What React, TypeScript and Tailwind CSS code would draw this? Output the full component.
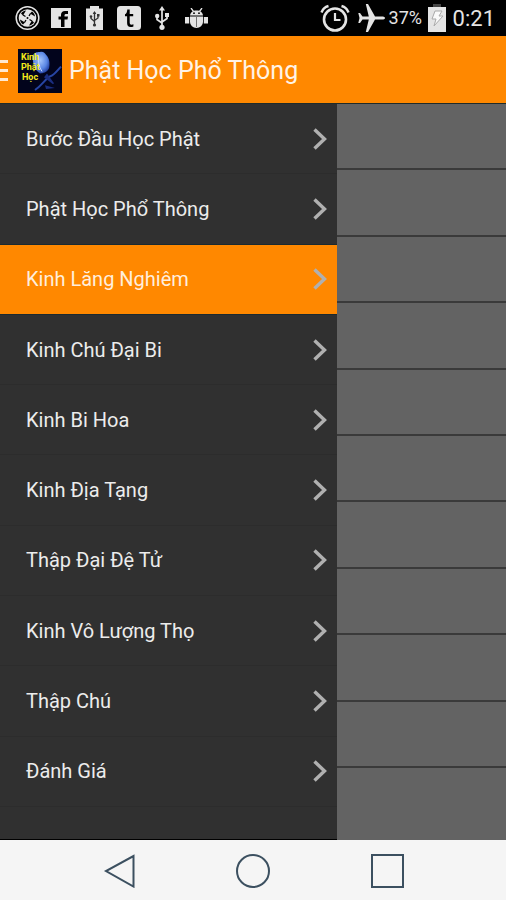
import React, { useState } from "react";

const menuItems = [
  "Bước Đầu Học Phật",
  "Phật Học Phổ Thông",
  "Kinh Lăng Nghiêm",
  "Kinh Chú Đại Bi",
  "Kinh Bi Hoa",
  "Kinh Địa Tạng",
  "Thập Đại Đệ Tử",
  "Kinh Vô Lượng Thọ",
  "Thập Chú",
  "Đánh Giá",
];

function StatusBar() {
  return (
    <div className="flex h-9 items-center justify-between bg-black pl-[15px] pr-[11px] text-[#e4e4e4]">
      <div className="flex items-center">
        {/* shutter */}
        <svg width="25" height="26" viewBox="0 0 25 26" fill="none" stroke="currentColor">
          <circle cx="12.5" cy="13" r="11.3" strokeWidth="1.5" />
          <circle cx="12.5" cy="13" r="8.8" fill="currentColor" stroke="none" />
          <path
            d="M11 5.500 8 10.500 6 8.500C7.200 6.800 9 5.700 11 5.500zM20 11.500l-5-3 2-2c1.700 1.200 2.800 3 3 5zM14 20.500l3-5 2 2c-1.200 1.700-3 2.800-5 3zM5 14.500l5 3-2 2c-1.700-1.200-2.800-3-3-5z"
            fill="#000"
            stroke="none"
          />
          <path d="m8 10 2.500 1.500M15.500 8.500 14 11M17 16l-2.500-1.500M9.500 17.500 11 15" stroke="#000" strokeWidth="1.300" />
          <circle cx="12.5" cy="13" r="1" fill="#000" stroke="none" />
        </svg>
        {/* facebook */}
        <svg className="ml-[11px]" width="20" height="20" viewBox="0 0 20 20">
          <path d="M0 0h20v20H0z" fill="currentColor" />
          <path d="M10 19v-7.500H7.500v-3H10V6.800C10 4.300 11.500 3 14 3h3v3h-1.800C14 6 13.500 6.500 13.500 7.500v1H17l-.5 3h-3V19z" fill="#000" />
        </svg>
        {/* battery with usb */}
        <svg className="ml-[15px]" width="17" height="24" viewBox="0 0 17 24">
          <path d="M4 0h9v2.500h4V24H0V2.500h4z" fill="currentColor" />
          <path d="M8.500 6v13M5 10v2.500l3.500 3M12 9v3l-3.500 2.500" fill="none" stroke="#333" strokeWidth="1.300" />
          <circle cx="8.500" cy="19" r="1.600" fill="#333" />
          <circle cx="5" cy="10.500" r="1.300" fill="#333" />
          <path d="M11 8h2.500v2.500H11zM8.500 5l1.800 3H6.700z" fill="#333" />
        </svg>
        {/* tumblr */}
        <svg className="ml-[14px]" width="24" height="24" viewBox="0 0 24 24">
          <rect width="24" height="24" rx="3.500" fill="currentColor" />
          <path d="M10.300 3.500h2.400V8h3.500v2.200h-3.500v6.300c0 1.600.7 2.200 1.800 2.200.7 0 1.300-.2 1.900-.5v2.300c-.9.400-1.800.6-2.800.6-2.300 0-3.500-1.200-3.500-4v-6.900H8V8.300c1.400-.5 2.100-2 2.300-4.800z" fill="#000" />
        </svg>
        {/* usb */}
        <svg className="ml-[14px]" width="14" height="24" viewBox="0 0 14 24" fill="none" stroke="currentColor" strokeWidth="1.700">
          <path d="M7 3v18M2 10v3.500l5 3.500M12 9v3.500l-5 3.500" />
          <path d="m7 0 3 4.500H4z" fill="currentColor" stroke="none" />
          <circle cx="7" cy="21.300" r="2.600" fill="currentColor" stroke="none" />
          <circle cx="2.200" cy="10" r="2.200" fill="currentColor" stroke="none" />
          <path d="M10 7h4v4h-4z" fill="currentColor" stroke="none" />
        </svg>
        {/* android debug */}
        <svg className="ml-4" width="23" height="20" viewBox="0 0 23 20" fill="currentColor">
          <path d="M5 7.500C5.300 4.500 7.800 2.500 11.500 2.500S17.700 4.500 18 7.500z" />
          <path d="m6 0 2.500 3.500M17 0l-2.500 3.500" stroke="currentColor" strokeWidth="1.300" />
          <path d="M5 8.500h13v5.500a6.500 6 0 0 1-13 0zM0 9h4.200v6.500H0zM18.800 9H23v6.500h-4.200z" />
          <circle cx="9" cy="5.200" r=".9" fill="#000" />
          <circle cx="14" cy="5.200" r=".9" fill="#000" />
          <path d="M11.500 9v10" stroke="#555" strokeWidth=".8" />
        </svg>
      </div>
      <div className="flex items-center">
        {/* alarm */}
        <svg width="30" height="28" viewBox="0 0 30 28" fill="none" stroke="currentColor" strokeWidth="2.600">
          <circle cx="15" cy="15.500" r="11" />
          <path d="M15 9v7h5.500" strokeWidth="2.200" />
          <path d="M1.500 8.500C2.500 5.500 5 3 8.500 2M28.500 8.500c-1-3-3.500-5.500-7-6.500" strokeWidth="2.400" />
        </svg>
        {/* airplane */}
        <svg className="ml-2" width="27" height="28" viewBox="0 0 27 28" fill="currentColor">
          <path d="M27 14c0-1-1.500-1.500-3-1.500h-7L10 0H7.800l3 12.500H4.500L2 9H.3l1.200 5L.3 19H2l2.500-3.500h6.300l-3 12.500H10l7-12.500h7c1.500 0 3-.5 3-1.500z" />
        </svg>
        <span className="ml-1 w-[39px] text-lg">37%</span>
        <svg width="18" height="28" viewBox="0 0 18 28">
          <path d="M5 0h8v4H5z" fill="#444" />
          <path d="M0 3h18v25H0z" fill="currentColor" />
          <path d="M7 7h7l-3 5h4L6 22l2-7H4z" fill="#fafafa" stroke="#aaa" strokeWidth="1" />
        </svg>
        <span className="ml-[7px] text-[22px]">0:21</span>
      </div>
    </div>
  );
}

function Logo() {
  return (
    <svg className="ml-[10px]" width="44" height="44" viewBox="0 0 44 45" preserveAspectRatio="none">
      <defs>
        <radialGradient id="petal" cx="45%" cy="40%" r="65%">
          <stop offset="0" stopColor="#a4c4fa" />
          <stop offset=".6" stopColor="#5a86e4" />
          <stop offset="1" stopColor="#1c3798" />
        </radialGradient>
      </defs>
      <path d="M0 0h44v45H0z" fill="#02041c" />
      <path d="M15 6c2-3 5-3 7-3 3-1 5 1 6 3 4 4 4 10 3 14-2 4-6 5-9 5-5-3-8-9-7-19z" fill="url(#petal)" />
      <path d="M20 6c0 7 1 12 4 17" stroke="#c3d8ff" fill="none" />
      <path d="M43 18c-4 4-6 8-11 10-5 3-8 9-15 14" stroke="#2745a4" strokeWidth="2" fill="none" />
      <path d="m29 25 7 10-1 1-9-7zM27 37l10 3-9 1z" fill="#1b2e80" />
      <g fill="#f5ec1b" fontFamily="Roboto, sans-serif" fontWeight="700" fontSize="9">
        <text x="3" y="11">Kinh</text>
        <text x="3" y="21">Phật</text>
        <text x="4" y="32">Học</text>
      </g>
    </svg>
  );
}

function App() {
  const [selected, setSelected] = useState(2);

  return (
    <div className="flex min-h-screen flex-col bg-black font-['Roboto','Noto_Sans',sans-serif]">
      <StatusBar />

      <header className="flex h-[67px] items-center bg-[#ff8800] pt-0.5">
        <button aria-label="Menu" className="flex w-2 flex-col gap-[6px]">
          <span className="h-[3px] w-full bg-[#ffe9d2]" />
          <span className="h-[3px] w-full bg-[#ffe9d2]" />
          <span className="h-[3px] w-full bg-[#ffe9d2]" />
        </button>
        <Logo />
        <h1 className="ml-[7px] text-[25px] text-[#fff3e6]">Phật Học Phổ Thông</h1>
      </header>

      <div className="flex flex-1 border-t border-[#1f2b29]">
        <nav className="flex w-2/3 flex-col border-b border-black bg-[#303030] pb-8">
          {menuItems.map((item, index) => (
            <button
              key={item}
              onClick={() => setSelected(index)}
              className={`flex min-h-12 flex-1 items-center justify-between border-b pl-[26px] pr-2.5 text-left text-xl ${
                index === selected
                  ? "border-[#1b2a30] bg-[#ff8800] text-[#ffeedd]"
                  : index === selected - 1
                    ? "border-[#1b2a30] text-[#ececec]"
                    : "border-[#2c2c2c] text-[#ececec]"
              }`}
            >
              {item}
              <svg width="14" height="22" viewBox="0 0 14 22" fill="none" stroke="#b0b0b0" strokeWidth="3.400">
                <path d="m1.500 1.500 10 9.500-10 9.500" />
              </svg>
            </button>
          ))}
        </nav>
        <ul className="flex flex-1 flex-col bg-[#636363] pb-[72px]">
          {menuItems.map((item) => (
            <li key={item} className="flex-1 border-b-2 border-[#3a3a3a]" />
          ))}
        </ul>
      </div>

      <footer className="flex h-[60px] items-center justify-center gap-[100px] bg-[#f5f5f5] pt-0.5 text-[#3c5060]">
        <button aria-label="Back">
          <svg width="34" height="34" viewBox="0 0 34 34" fill="none" stroke="currentColor" strokeWidth="2">
            <path d="M31.500 2v30.500L4 17z" />
          </svg>
        </button>
        <button aria-label="Home">
          <svg width="34" height="34" viewBox="0 0 34 34" fill="none" stroke="currentColor" strokeWidth="2">
            <circle cx="17" cy="17" r="16" />
          </svg>
        </button>
        <button aria-label="Recent apps">
          <svg width="34" height="34" viewBox="0 0 34 34" fill="none" stroke="currentColor" strokeWidth="2">
            <path d="M2 1h31v32H2z" />
          </svg>
        </button>
      </footer>
    </div>
  );
}

export default App;
